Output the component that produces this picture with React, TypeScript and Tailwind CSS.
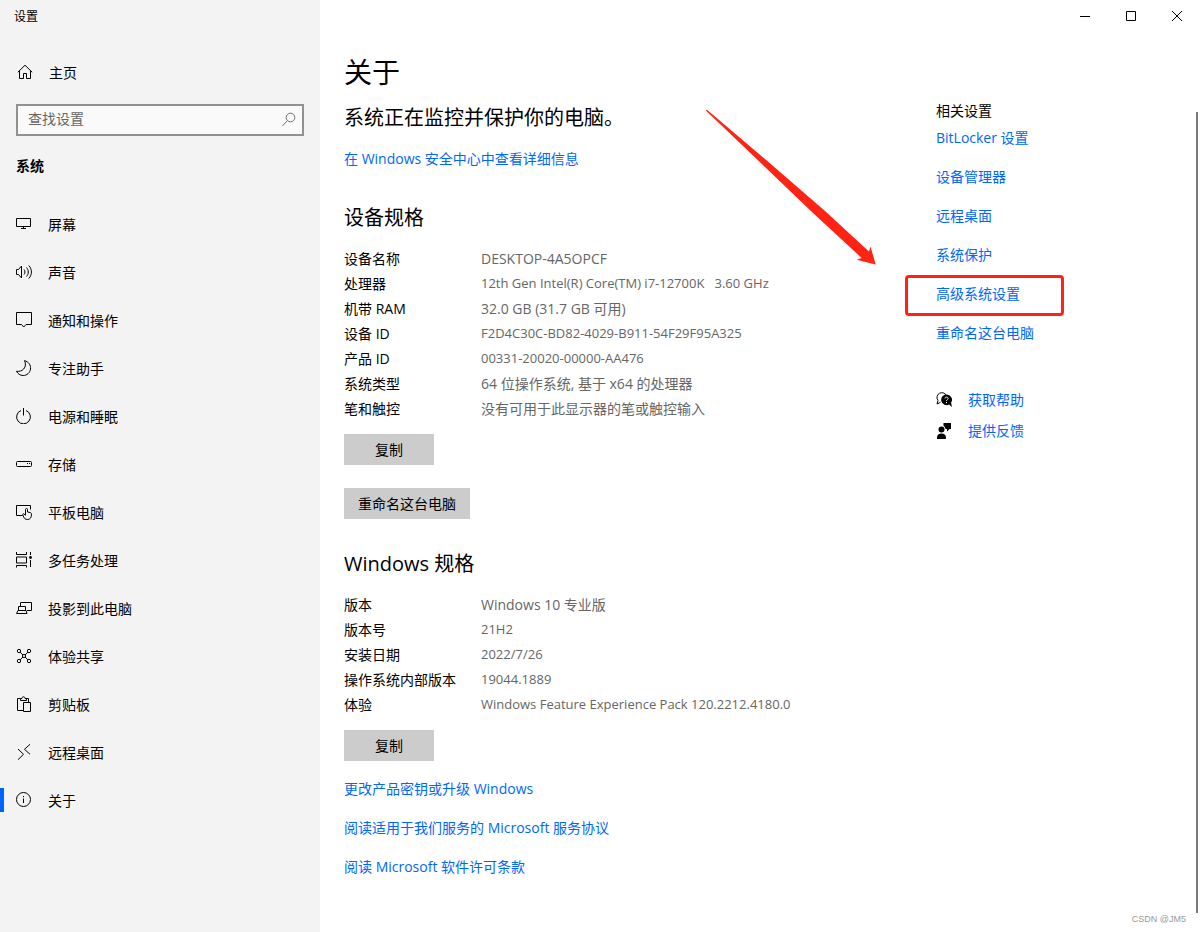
import type { ReactNode } from "react"
import { twMerge } from "tailwind-merge"

type IconProps = {
  children: ReactNode
  className?: string
}

const Icon: React.FC<IconProps> = ({ children, className = "" }) => (
  <svg
    viewBox="0 0 16 16"
    className={twMerge("h-4 w-4 shrink-0 fill-none stroke-black", className)}
    aria-hidden="true"
  >
    {children}
  </svg>
)

const navItems = [
  {
    label: "屏幕",
    icon: <path d="M.5 2.5h14v8H.5zM7.5 11v1.5M5 12.5h5" />,
  },
  {
    label: "声音",
    icon: (
      <path d="M.5 5.5h2l3-3.500v12l-3-3.500h-2zM8 5.500c1.300 1.500 1.300 3.500 0 5M10.500 3.500c2.400 2.600 2.400 6.400 0 9M12.800 1.500c3.500 3.800 3.500 9.200 0 13" />
    ),
  },
  {
    label: "通知和操作",
    icon: <path d="M.5.5h15v12H10L7.700 15 5.500 12.500h-5z" />,
  },
  {
    label: "专注助手",
    icon: (
      <path d="M8.500.6c4 1.100 6.500 4.400 6 8.400-.5 3.800-3.600 6.500-7.300 6.500-3 0-5.400-1.600-6.700-4.300 2.600.6 5.400-.2 7.200-2.200 2-2.300 2.300-5.400.8-8.400z" />
    ),
  },
  {
    label: "电源和睡眠",
    icon: <path d="M7.500 0v7.500M5 2.500a6.900 6.900 0 1 0 5 0" />,
  },
  {
    label: "存储",
    icon: (
      <>
        <rect x=".5" y="5.5" width="15" height="5" rx="1" />
        <path d="M11 7.500h1M13 7.500h1" />
      </>
    ),
  },
  {
    label: "平板电脑",
    icon: (
      <path d="M6.500 11.500H.5v-10h14v4M9.500 11V5.500c0-1.400 2-1.400 2 0V8l2.500.5c1 .2 1.500.8 1.500 1.700 0 3.200-1.200 5.300-4 5.300-2.200 0-3-1-3.800-2.500L6.800 11c-.4-1 .7-1.600 1.400-.9l1.300 1.400" />
    ),
  },
  {
    label: "多任务处理",
    icon: (
      <>
        <path d="M.5 0v2.500h10V0M.5 5h10v6H.5zM.5 15.500v-2h10v2M14.500 0v3M14.500 8v7" />
        <circle cx="14.500" cy="5.500" r="1.400" className="fill-black stroke-none" />
      </>
    ),
  },
  {
    label: "投影到此电脑",
    icon: (
      <path d="M4.500 6V2.500h11v8H11M2.500 10.500v-4h7v4M2 10.500h8l1 3H.5z" />
    ),
  },
  {
    label: "体验共享",
    icon: (
      <>
        <circle cx="3" cy="3" r="1.700" />
        <circle cx="13" cy="3" r="1.700" />
        <circle cx="3" cy="13" r="1.700" />
        <circle cx="13" cy="13" r="1.700" />
        <circle cx="8" cy="8" r="1.600" />
        <path d="m4.200 4.200 2.700 2.700M11.800 4.200 9.100 6.900M4.200 11.800l2.700-2.700M11.800 11.800 9.100 9.100" />
      </>
    ),
  },
  {
    label: "剪贴板",
    icon: (
      <path d="M7 14.500H1.500v-12H4M10 2.500h2.500V6M4.500 4.500v-2H6c0-2.400 3-2.400 3 0h1.500v2zM7.500 6.500h7v9h-7z" />
    ),
  },
  {
    label: "远程桌面",
    icon: <path d="m2 5 5.500 5.300L2 15.700M14 .3 8.500 5.300 14 10.300" />,
  },
  {
    label: "关于",
    icon: (
      <>
        <circle cx="7.500" cy="7.500" r="7" />
        <path d="M7.500 6.500V11M7.500 4v1.200" />
      </>
    ),
  },
]

type Spec = {
  name: string
  value: string
  small?: boolean
}

const deviceSpecs: Spec[] = [
  { name: "设备名称", value: "DESKTOP-4A5OPCF" },
  {
    name: "处理器",
    value: "12th Gen Intel(R) Core(TM) i7-12700K   3.60 GHz",
    small: true,
  },
  { name: "机带 RAM", value: "32.0 GB (31.7 GB 可用)" },
  {
    name: "设备 ID",
    value: "F2D4C30C-BD82-4029-B911-54F29F95A325",
    small: true,
  },
  { name: "产品 ID", value: "00331-20020-00000-AA476", small: true },
  { name: "系统类型", value: "64 位操作系统, 基于 x64 的处理器" },
  { name: "笔和触控", value: "没有可用于此显示器的笔或触控输入" },
]

const windowsSpecs: Spec[] = [
  { name: "版本", value: "Windows 10 专业版" },
  { name: "版本号", value: "21H2", small: true },
  { name: "安装日期", value: "2022/7/26", small: true },
  { name: "操作系统内部版本", value: "19044.1889", small: true },
  {
    name: "体验",
    value: "Windows Feature Experience Pack 120.2212.4180.0",
    small: true,
  },
]

const licenseLinks = [
  "更改产品密钥或升级 Windows",
  "阅读适用于我们服务的 Microsoft 服务协议",
  "阅读 Microsoft 软件许可条款",
]

const relatedLinks = [
  "BitLocker 设置",
  "设备管理器",
  "远程桌面",
  "系统保护",
  "高级系统设置",
  "重命名这台电脑",
]

const Sidebar = () => (
  <aside className="w-80 shrink-0 bg-[#f3f3f3]">
    <div className="flex h-8 items-center pt-0.5 pl-3.5 text-xs">设置</div>
    <a href="#home" className="mt-4 flex h-12 items-center gap-4 pl-[17px]">
      <Icon>
        <path d="M.8 8.300 8 1.200l7.200 7.100M2.500 7v7.500h4v-5h3v5h4V7" />
      </Icon>
      <span className="pt-0.5">主页</span>
    </a>
    <div className="mx-4 mt-2 flex h-8 items-center border-2 border-[#919191] bg-[#fafafa] pr-[5px] pl-2.5">
      <input
        type="text"
        aria-label="查找设置"
        placeholder="查找设置"
        className="min-w-0 flex-1 bg-transparent pb-0.5 outline-none placeholder:text-[#666]"
      />
      <button type="button" aria-label="搜索">
        <Icon className="stroke-[#707070]">
          <circle cx="9.500" cy="5.500" r="4.300" />
          <path d="m6.400 8.600-5 5.400" />
        </Icon>
      </button>
    </div>
    <h2 className="mt-4 flex h-7 items-center pl-4 font-bold">系统</h2>
    <nav className="mt-5">
      {navItems.map(({ label, icon }) => (
        <a
          key={label}
          href={`#${label}`}
          className="relative flex h-12 items-center gap-4 pl-4"
        >
          {label === "关于" && (
            <span className="absolute top-3 left-0 h-6 w-1 bg-[#0063ff]" />
          )}
          <Icon>{icon}</Icon>
          <span className="pt-0.5">{label}</span>
        </a>
      ))}
    </nav>
  </aside>
)

const WindowControls = () => (
  <div className="flex h-8 justify-end">
    <button type="button" aria-label="最小化" className="flex w-[46px] items-center justify-center">
      <Icon>
        <path d="M3 8.500h10" />
      </Icon>
    </button>
    <button type="button" aria-label="最大化" className="flex w-[46px] items-center justify-center">
      <Icon>
        <path d="M3.500 3.500h9v9h-9z" />
      </Icon>
    </button>
    <button type="button" aria-label="关闭" className="flex w-[46px] items-center justify-center">
      <Icon>
        <path d="m3 3 10 10M13 3 3 13" />
      </Icon>
    </button>
  </div>
)

const SpecTable: React.FC<{ rows: Spec[] }> = ({ rows }) => (
  <table className="mt-2 text-left">
    <tbody>
      {rows.map(({ name, value, small }) => (
        <tr key={name} className="h-[25px]">
          <th scope="row" className="w-[137px] p-0 font-normal">
            {name}
          </th>
          <td
            className={twMerge(
              "p-0 whitespace-pre text-[#666]",
              small && "text-[13px]",
            )}
          >
            {value}
          </td>
        </tr>
      ))}
    </tbody>
  </table>
)

const About = () => (
  <div className="min-w-0 flex-1 pt-4 pl-6">
    <h1 className="flex h-12 items-center text-[28px]">关于</h1>
    <p className="flex h-[42px] items-center pt-0.5 text-xl">
      系统正在监控并保护你的电脑。
    </p>
    <a href="#security" className="flex h-[42px] items-center text-[#0066ff]">
      在 Windows 安全中心中查看详细信息
    </a>

    <h2 className="mt-4 flex h-[42px] items-center pt-0.5 text-xl">
      设备规格
    </h2>
    <SpecTable rows={deviceSpecs} />
    <button type="button" className="mt-[13px] block h-[31px] w-[90px] bg-[#ccc]">
      复制
    </button>
    <button type="button" className="mt-[23px] block h-[31px] bg-[#ccc] px-3.5">
      重命名这台电脑
    </button>

    <h2 className="mt-[23px] flex h-[42px] items-center pt-0.5 text-xl">
      Windows 规格
    </h2>
    <SpecTable rows={windowsSpecs} />
    <button type="button" className="mt-[13px] block h-[31px] w-[90px] bg-[#ccc]">
      复制
    </button>
    <ul className="mt-2">
      {licenseLinks.map((label) => (
        <li key={label} className="flex h-[39px] items-center">
          <a href="#license" className="text-[#0066ff]">
            {label}
          </a>
        </li>
      ))}
    </ul>
  </div>
)

// Red frame and arrow that point the reader at a link
const Callout = () => (
  <>
    <span className="pointer-events-none absolute top-0 -left-[31px] h-[41px] w-[159px] rounded-sm border-3 border-[#ff2314]" />
    <svg
      viewBox="0 0 172 158"
      className="pointer-events-none absolute -top-[166px] -left-[231px] h-[158px] w-[172px] max-w-none fill-[#ff2314]"
      aria-hidden="true"
    >
      <path d="M.8 1.500 2 .8 60 50 120 102l44 40.500 1.500-5 5.200 18-19-4.800 5-1.700L108 104 60 58z" />
    </svg>
  </>
)

const Related = () => (
  <aside className="w-[264px] shrink-0 pt-[71px]">
    <h2 className="leading-4">相关设置</h2>
    <ul>
      {relatedLinks.map((label) => (
        <li key={label} className="relative flex h-[39px] items-center pb-0.5">
          <a href="#related" className="text-[#0066ff]">
            {label}
          </a>
          {label === "高级系统设置" && <Callout />}
        </li>
      ))}
    </ul>
    <div className="mt-[31px]">
      <a href="#help" className="flex h-[31px] items-center gap-4 text-[#0066ff]">
        <Icon>
          <path d="M4.500 10.300 1 12l1-3.400A4.900 4.900 0 1 1 10.500 4" />
          <path
            d="M10.500 2.500a5.300 5.300 0 1 0 2.600 9.900l2.900 2.600-.9-4.300a5.300 5.300 0 0 0-4.600-8.200z"
            className="fill-black stroke-none"
          />
          <path
            d="M8.900 6.500c0-2 3.200-2 3.200 0 0 1.100-1.600 1.200-1.600 2.500M10.500 10v1.200"
            className="stroke-white"
          />
        </Icon>
        获取帮助
      </a>
      <a href="#feedback" className="flex h-[31px] items-center gap-4 text-[#0066ff]">
        <Icon className="fill-black stroke-none">
          <circle cx="5.500" cy="6.500" r="3" />
          <path d="M1 16v-1.500c0-2.600 2-4 4.500-4s4.500 1.400 4.500 4V16zM7.500 0H15v6h-1.500L11 8.500V6H9.500C9.300 4.500 8.700 3.700 7.500 3z" />
        </Icon>
        提供反馈
      </a>
    </div>
  </aside>
)

const App = () => (
  <div className="flex min-h-screen bg-white font-['Open_Sans','Noto_Sans_CJK_SC',sans-serif] text-sm text-black">
    <Sidebar />
    <main className="relative min-w-0 flex-1">
      <WindowControls />
      <div className="flex">
        <About />
        <Related />
      </div>
      <span className="absolute top-28 right-0.5 bottom-[19px] w-0.5 bg-[#7a7a7a]" />
      <span className="absolute right-3.5 bottom-1.5 font-['Liberation_Sans',sans-serif] text-[9px] leading-3.5 text-[#999]">
        CSDN @JM5
      </span>
    </main>
  </div>
)

export default App
